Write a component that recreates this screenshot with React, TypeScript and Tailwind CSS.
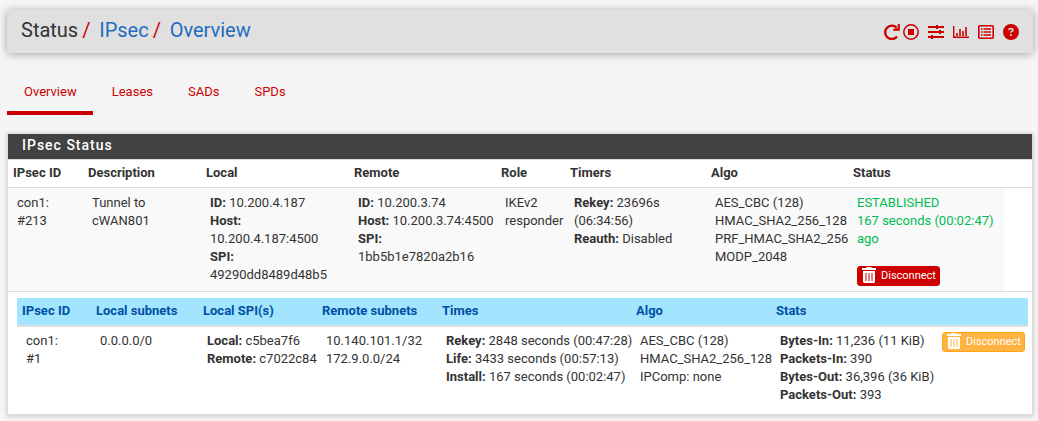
import type { ReactNode } from "react";
import { FaCircleQuestion } from "react-icons/fa6";

const th = "pb-0.5 pl-[5px] pr-1 text-left font-bold";
const td = "pl-[9px] pr-1 align-top";

function TrashIcon() {
  return (
    <svg width="14" height="16" viewBox="0 0 14 16" aria-hidden="true">
      <path
        fill="#fff"
        fillRule="evenodd"
        d="M4 1 5 0h4l1 1h4v2H0V1zM1 4h12v10.500a1.500 1.500 0 0 1-1.500 1.500h-9A1.500 1.500 0 0 1 1 14.500zM3.500 6v8h1V6zM6.500 6v8h1V6zM9.500 6v8h1V6z"
      />
    </svg>
  );
}

function Disconnect({ tone }: { tone: string }) {
  return (
    <button
      type="button"
      className={`flex h-5 w-[83px] items-start gap-[5px] rounded-[3px] border pl-1 text-[11px] leading-[18px] text-white ${tone}`}
    >
      <TrashIcon />
      Disconnect
    </button>
  );
}

function Pair({ label, children }: { label: string; children: ReactNode }) {
  return (
    <div>
      <b>{label}:</b> {children}
    </div>
  );
}

function Cols({ items }: { items: string[] }) {
  return (
    <colgroup>
      {items.map((c, i) => (
        <col key={i} className={c} />
      ))}
    </colgroup>
  );
}

function ToolIcon({ label, children }: { label: string; children: ReactNode }) {
  return (
    <a href="#" aria-label={label} className="block">
      <svg width="16" height="16" viewBox="0 0 16 16" fill="none" stroke="currentColor">
        {children}
      </svg>
    </a>
  );
}

const outerCols = [
  "w-[75px]",
  "w-[118px]",
  "w-[148px]",
  "w-[147px]",
  "w-[69px]",
  "w-[141px]",
  "w-[142px]",
  "w-[156px]",
  "w-[28px]",
];
const childCols = [
  "w-[74px]",
  "w-[107px]",
  "w-[119px]",
  "w-[120px]",
  "w-[194px]",
  "w-[140px]",
  "w-[162px]",
  "w-[95px]",
];

export default function App() {
  return (
    <div className="min-h-screen bg-[#f5f5f5] pt-2.5 pr-[5px] pb-1.5 pl-[7px] font-['Roboto',sans-serif] text-[13px] leading-[18px] text-[#333]">
      <header className="flex h-[43px] items-center justify-between rounded-[3px] bg-[#e0e0e0] px-3.5 shadow-[0_1px_8px_rgba(0,0,0,0.35)]">
        <nav aria-label="Breadcrumb" className="pb-1 text-xl leading-7">
          <ol className="flex">
            <li>Status</li>
            <li className="flex">
              <span className="w-[21px] pl-1 text-[#c00]">/</span>
              <a href="#" className="text-[#1e6dbf]">IPsec</a>
            </li>
            <li className="flex">
              <span className="w-[21px] pl-1 text-[#c00]">/</span>
              <a href="#" className="text-[#1e6dbf]">Overview</a>
            </li>
          </ol>
        </nav>
        <div className="flex items-center gap-[9px] text-[#c00]">
          <div className="flex gap-[3px]">
            <ToolIcon label="Restart service">
              <path strokeWidth="2.400" d="M12.600 3.600A6.700 6.700 0 1 0 13 12.600" />
              <path fill="currentColor" stroke="none" d="M15.800 0v6.800H9.200V5L13.800 4V0z" />
            </ToolIcon>
            <ToolIcon label="Stop service">
              <circle cx="8" cy="8" r="7.200" strokeWidth="1.500" />
              <path fill="currentColor" stroke="none" d="M5 5h6v6H5z" />
            </ToolIcon>
          </div>
          <ToolIcon label="Settings">
            <path strokeWidth="2" d="M0 3h16M0 8h16M0 13h16" />
            <path strokeWidth="2" d="M9 1v4M12 6v4M4 11v4" />
          </ToolIcon>
          <ToolIcon label="Monitoring">
            <path strokeWidth="1.400" d="M.7 2v11.300H16" />
            <path strokeWidth="1.600" d="M4 12V9M7 12V5M10 12V7M13 12V3" />
          </ToolIcon>
          <ToolIcon label="Logs">
            <rect x=".8" y="1.800" width="14.400" height="12.400" rx="1" strokeWidth="1.600" />
            <path strokeWidth="1.300" d="M3 5h1.500M3 8h1.500M3 11h1.500M5.500 5h7.500M5.500 8h7.500M5.500 11h7.500" />
          </ToolIcon>
          <a href="#" aria-label="Help">
            <FaCircleQuestion size={16} />
          </a>
        </div>
      </header>

      <nav aria-label="IPsec pages" className="mt-5 flex h-[42px] gap-0.5 text-[#c00]">
        <a href="#" aria-current="page" className="border-b-4 border-[#c00] pt-2.5 pr-4 pl-[17px]">Overview</a>
        <a href="#" className="pt-2.5 pr-4 pl-[17px]">Leases</a>
        <a href="#" className="pt-2.5 pr-4 pl-[17px]">SADs</a>
        <a href="#" className="pt-2.5 pr-4 pl-[17px]">SPDs</a>
      </nav>

      <section className="mt-[18px] border border-[#ddd] bg-white pb-[5px] shadow-[0_1px_5px_rgba(0,0,0,0.2)]">
        <h2 className="h-[25px] bg-[#424242] pl-3.5 text-sm leading-[22px] font-medium tracking-[1px] text-white">
          IPsec Status
        </h2>
        <table className="w-full table-fixed border-collapse whitespace-nowrap">
          <Cols items={outerCols} />
          <thead>
            <tr className="h-7 border-y border-[#ddd]">
              <th className={th}>IPsec ID</th>
              <th className={th}>Description</th>
              <th className={th}>Local</th>
              <th className={th}>Remote</th>
              <th className={th}>Role</th>
              <th className={th}>Timers</th>
              <th className={th}>Algo</th>
              <th className={th}>Status</th>
              <td />
            </tr>
          </thead>
          <tbody>
            <tr className="border-b border-[#ddd] *:pt-1.5 *:pb-[5px] [&>td:not(:last-child)]:bg-[#f9f9f9]">
              <td className={td}>con1:<br />#213</td>
              <td className={td}>Tunnel to<br />cWAN801</td>
              <td className={td}>
                <Pair label="ID">10.200.4.187</Pair>
                <Pair label="Host"><br />10.200.4.187:4500</Pair>
                <Pair label="SPI"><br />49290dd8489d48b5</Pair>
              </td>
              <td className={td}>
                <Pair label="ID">10.200.3.74</Pair>
                <Pair label="Host">10.200.3.74:4500</Pair>
                <Pair label="SPI"><br />1bb5b1e7820a2b16</Pair>
              </td>
              <td className={td}>IKEv2<br />responder</td>
              <td className={td}>
                <Pair label="Rekey">23696s<br />(06:34:56)</Pair>
                <Pair label="Reauth">Disabled</Pair>
              </td>
              <td className={td}>AES_CBC (128)<br />HMAC_SHA2_256_128<br />PRF_HMAC_SHA2_256<br />MODP_2048</td>
              <td className={td}>
                <p className="mb-[18px] text-[#00bb53]">ESTABLISHED<br />167 seconds (00:02:47)<br />ago</p>
                <Disconnect tone="border-[#c00] bg-[#c00]" />
              </td>
              <td />
            </tr>
            <tr>
              <td colSpan={9} className="pt-1.5 pr-1 pl-[9px]">
                <table className="w-full table-fixed border-collapse">
                  <Cols items={childCols} />
                  <thead>
                    <tr className="h-7 border-b-2 border-[#ddd] bg-[#a3e4ff] text-[#0050a4]">
                      <th className={th}>IPsec ID</th>
                      <th className={th}>Local subnets</th>
                      <th className={th}>Local SPI(s)</th>
                      <th className={th}>Remote subnets</th>
                      <th className={th}>Times</th>
                      <th className={th}>Algo</th>
                      <th className={th}>Stats</th>
                      <td />
                    </tr>
                  </thead>
                  <tbody>
                    <tr className="*:py-[5px]">
                      <td className={td}>con1:<br />#1</td>
                      <td className={td}>0.0.0.0/0</td>
                      <td className={td}>
                        <Pair label="Local">c5bea7f6</Pair>
                        <Pair label="Remote">c7022c84</Pair>
                      </td>
                      <td className={td}>10.140.101.1/32<br />172.9.0.0/24</td>
                      <td className={td}>
                        <Pair label="Rekey">2848 seconds (00:47:28)</Pair>
                        <Pair label="Life">3433 seconds (00:57:13)</Pair>
                        <Pair label="Install">167 seconds (00:02:47)</Pair>
                      </td>
                      <td className={td}>AES_CBC (128)<br />HMAC_SHA2_256_128<br />IPComp: none</td>
                      <td className={td}>
                        <Pair label="Bytes-In">11,236 (11 KiB)</Pair>
                        <Pair label="Packets-In">390</Pair>
                        <Pair label="Bytes-Out">36,396 (36 KiB)</Pair>
                        <Pair label="Packets-Out">393</Pair>
                      </td>
                      <td className={td}>
                        <Disconnect tone="border-[#ffa41b] bg-[#ffb340]" />
                      </td>
                    </tr>
                  </tbody>
                </table>
              </td>
            </tr>
          </tbody>
        </table>
      </section>
    </div>
  );
}
